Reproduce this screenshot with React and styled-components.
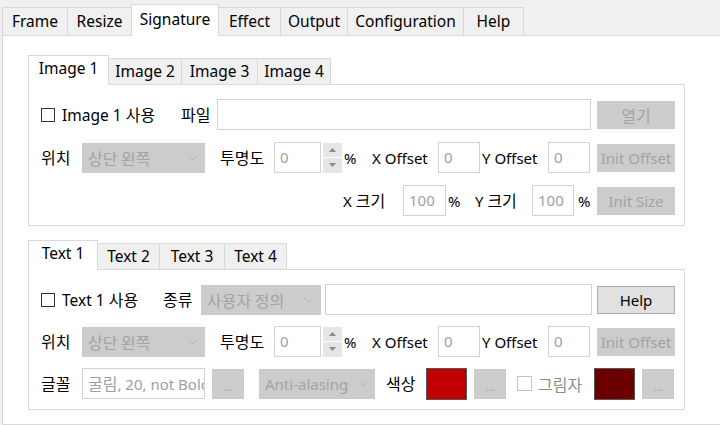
import React from "react";
import styled, { createGlobalStyle, css } from "styled-components";

const GlobalStyle = createGlobalStyle`
  html, body { margin: 0; padding: 0; background: #f0f0f0; overflow: hidden; }
  body {
    font-family: "Noto Sans", "Noto Sans CJK KR", sans-serif;
    font-size: 15px;
    color: #000;
  }
  * { box-sizing: border-box; }
`;

const Ko = styled.span`
  font-family: "Noto Sans CJK KR", sans-serif;
  font-size: 16px;
`;

const Window = styled.div`
  width: 100%;
  height: 425px;
  padding-left: 2px;
  display: flex;
  flex-direction: column;
  overflow: hidden;
`;

const MainTabs = styled.div`
  display: flex;
  align-items: flex-end;
  height: 35px;
  padding-left: 1px;
`;

const MainTab = styled.div`
  width: ${(p) => p.$w}px;
  height: ${(p) => (p.$active ? 32 : 28)}px;
  margin-left: -1px;
  margin-bottom: ${(p) => (p.$active ? -1 : 0)}px;
  border: 1px solid #d9d9d9;
  border-bottom: none;
  background: ${(p) => (p.$active ? "#fff" : "#f0f0f0")};
  position: relative;
  z-index: ${(p) => (p.$active ? 2 : 1)};
  display: flex;
  justify-content: center;
  padding-top: ${(p) => (p.$active ? 4 : 3)}px;
  line-height: 20px;
  font-size: 15.5px;
  white-space: nowrap;
`;

const Content = styled.div`
  flex: 1;
  background: #fff;
  border: 1px solid #d9d9d9;
  border-right: none;
  padding: 19px 0 0 25px;
  display: flex;
  flex-direction: column;
  gap: 14px;
`;

const Group = styled.div`
  width: 657px;
  display: flex;
  flex-direction: column;
`;

const GroupTabs = styled.div`
  display: flex;
  align-items: flex-end;
  height: 29px;
  padding-left: 1px;
`;

const GroupTab = styled.div`
  width: ${(p) => p.$w}px;
  height: ${(p) => (p.$active ? 30 : 26)}px;
  margin-left: -1px;
  margin-bottom: ${(p) => (p.$active ? -1 : 0)}px;
  border: 1px solid #d9d9d9;
  border-bottom: none;
  background: ${(p) => (p.$active ? "#fff" : "#f0f0f0")};
  position: relative;
  z-index: ${(p) => (p.$active ? 2 : 1)};
  display: flex;
  justify-content: center;
  padding-top: 2px;
  line-height: 20px;
  font-size: 15.5px;
  white-space: nowrap;
`;

const GroupBody = styled.div`
  border: 1px solid #d9d9d9;
  background: #fff;
  padding: 14px 9px ${(p) => p.$pb}px 12px;
  display: flex;
  flex-direction: column;
  gap: ${(p) => p.$gap}px;
`;

const Row = styled.div`
  display: flex;
  align-items: center;
  height: 31px;
  justify-content: ${(p) => (p.$right ? "flex-end" : "flex-start")};
`;

const Label = styled.span`
  flex: none;
  width: ${(p) => p.$w}px;
  margin-left: ${(p) => p.$ml || 0}px;
  white-space: nowrap;
  color: #000;
  line-height: 20px;
`;

const CheckLabel = styled.label`
  flex: none;
  width: ${(p) => p.$w}px;
  margin-left: ${(p) => p.$ml || 0}px;
  display: flex;
  align-items: center;
  gap: ${(p) => (p.$disabled ? 6 : 7)}px;
  white-space: nowrap;
  font-size: 15.5px;
  line-height: 20px;
  color: ${(p) => (p.$disabled ? "#8c8c8c" : "#000")};
`;

const Box = styled.span`
  width: ${(p) => (p.$disabled ? 15 : 14)}px;
  height: ${(p) => (p.$disabled ? 15 : 14)}px;
  border: 1px solid ${(p) => (p.$disabled ? "#c4c4c4" : "#333")};
  background: #fff;
  flex: none;
`;

const Input = styled.div`
  flex: none;
  width: ${(p) => p.$w}px;
  height: 31px;
  margin-left: ${(p) => p.$ml || 0}px;
  border: 1px solid #d3d3d3;
  background: #fff;
  color: #a0a0a0;
  padding: 3px 5px 0;
  line-height: 22px;
  white-space: nowrap;
  overflow: hidden;
`;

const disabledLook = css`
  background: #cccccc;
  border: 1px solid #cccccc;
  color: #a3a3a3;
`;

const Combo = styled.div`
  flex: none;
  width: ${(p) => p.$w}px;
  height: 30px;
  margin-left: ${(p) => p.$ml || 0}px;
  ${disabledLook};
  display: flex;
  align-items: center;
  padding: 0 6px 0 5px;
  gap: 4px;
  span {
    flex: 1;
    overflow: hidden;
    white-space: nowrap;
  }
  svg { flex: none; }
`;

const Button = styled.div`
  flex: none;
  width: ${(p) => p.$w}px;
  height: ${(p) => p.$h || 28}px;
  margin-left: ${(p) => p.$ml || 0}px;
  ${(p) =>
    p.$enabled
      ? css`
          background: #e1e1e1;
          border: 1px solid #adadad;
          color: #000;
        `
      : disabledLook};
  display: flex;
  align-items: center;
  justify-content: center;
  white-space: nowrap;
  overflow: hidden;
  font-size: ${(p) => (p.$small ? 11 : 15)}px;
  padding-top: ${(p) => (p.$small ? 6 : 0)}px;
`;

const Spinner = styled.div`
  flex: none;
  width: 19px;
  height: 30px;
  margin-left: 2px;
  display: flex;
  flex-direction: column;
  gap: 1px;
`;

const SpinHalf = styled.div`
  flex: 1;
  background: #e6e6e6;
  display: flex;
  align-items: center;
  justify-content: center;
`;

const Swatch = styled.div`
  flex: none;
  width: 41px;
  height: 32px;
  background: ${(p) => p.$color};
  border: 1px solid #555;
`;

const Chevron = () => (
  <svg width="10" height="6" viewBox="0 0 10 6">
    <polyline points="0.5,0.5 5,5 9.5,0.5" fill="none" stroke="#b4b4b4" strokeWidth="1" />
  </svg>
);

const Tri = ({ up }) => (
  <svg width="7" height="4" viewBox="0 0 7 4">
    <polygon points={up ? "0,4 3.5,0 7,4" : "0,0 3.5,4 7,0"} fill="#8a8a8a" />
  </svg>
);

const PositionRow = () => (
  <Row>
    <Label $w={41}><Ko>위치</Ko></Label>
    <Combo $w={123}>
      <span><Ko>상단 왼쪽</Ko></span>
      <Chevron />
    </Combo>
    <Label $w={54} $ml={15}><Ko>투명도</Ko></Label>
    <Input $w={47}>0</Input>
    <Spinner>
      <SpinHalf><Tri up /></SpinHalf>
      <SpinHalf><Tri /></SpinHalf>
    </Spinner>
    <Label $w={28} $ml={2}>%</Label>
    <Label $w={66}>X Offset</Label>
    <Input $w={42}>0</Input>
    <Label $w={66} $ml={2}>Y Offset</Label>
    <Input $w={42}>0</Input>
    <Button $w={78} $ml={7}>Init Offset</Button>
  </Row>
);

const mainTabs = [
  ["Frame", 66],
  ["Resize", 65],
  ["Signature", 88],
  ["Effect", 63],
  ["Output", 68],
  ["Configuration", 117],
  ["Help", 61],
];

export default function App() {
  return (
    <>
      <GlobalStyle />
      <Window>
        <MainTabs>
          {mainTabs.map(([t, w]) => (
            <MainTab key={t} $w={w} $active={t === "Signature"}>
              {t}
            </MainTab>
          ))}
        </MainTabs>
        <Content>
          <Group>
            <GroupTabs>
              {[["Image 1", 81], ["Image 2", 74], ["Image 3", 77], ["Image 4", 74]].map(([t, w], i) => (
                <GroupTab key={t} $w={w} $active={i === 0}>{t}</GroupTab>
              ))}
            </GroupTabs>
            <GroupBody $gap={12} $pb={9}>
              <Row>
                <CheckLabel $w={140}>
                  <Box />
                  <span>Image 1 <Ko>사용</Ko></span>
                </CheckLabel>
                <Label $w={36}><Ko>파일</Ko></Label>
                <Input $w={374} />
                <Button $w={78} $ml={6}><Ko>열기</Ko></Button>
              </Row>
              <PositionRow />
              <Row $right>
                <Label $w={60}>X <Ko>크기</Ko></Label>
                <Input $w={43}>100</Input>
                <Label $w={27} $ml={2}>%</Label>
                <Label $w={57}>Y <Ko>크기</Ko></Label>
                <Input $w={42}>100</Input>
                <Label $w={19} $ml={4}>%</Label>
                <Button $w={78}>Init Size</Button>
              </Row>
            </GroupBody>
          </Group>
          <Group>
            <GroupTabs>
              {[["Text 1", 70], ["Text 2", 63], ["Text 3", 66], ["Text 4", 63]].map(([t, w], i) => (
                <GroupTab key={t} $w={w} $active={i === 0}>{t}</GroupTab>
              ))}
            </GroupTabs>
            <GroupBody $gap={11} $pb={10}>
              <Row>
                <CheckLabel $w={122}>
                  <Box />
                  <span>Text 1 <Ko>사용</Ko></span>
                </CheckLabel>
                <Label $w={38}><Ko>종류</Ko></Label>
                <Combo $w={120}>
                  <span><Ko>사용자 정의</Ko></span>
                  <Chevron />
                </Combo>
                <Input $w={267} $ml={4} />
                <Button $w={78} $ml={5} $enabled>Help</Button>
              </Row>
              <PositionRow />
              <Row>
                <Label $w={41}><Ko>글꼴</Ko></Label>
                <Input $w={123}><Ko>굴림</Ko>, 20, not Bold</Input>
                <Button $w={32} $h={30} $ml={7} $small>...</Button>
                <Combo $w={116} $ml={15}>
                  <span>Anti-alasing</span>
                  <Chevron />
                </Combo>
                <Label $w={40} $ml={11}><Ko>색상</Ko></Label>
                <Swatch $color="#be0000" />
                <Button $w={32} $h={30} $ml={7} $small>...</Button>
                <CheckLabel $w={77} $ml={11} $disabled>
                  <Box $disabled />
                  <Ko>그림자</Ko>
                </CheckLabel>
                <Swatch $color="#6c0000" />
                <Button $w={32} $h={30} $ml={7} $small>...</Button>
              </Row>
            </GroupBody>
          </Group>
        </Content>
      </Window>
    </>
  );
}
